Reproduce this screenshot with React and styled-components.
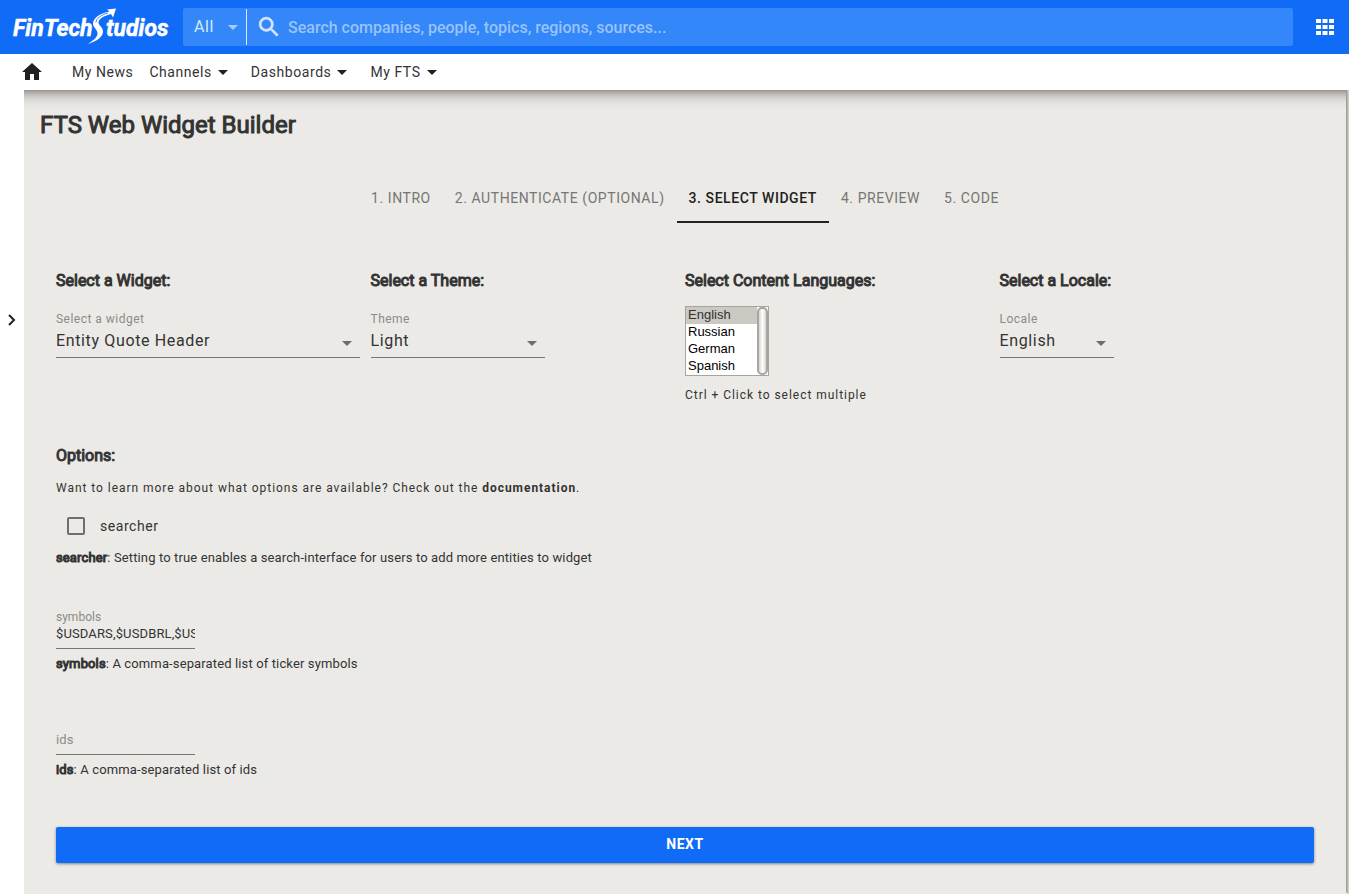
import React, { useState } from "react";
import styled, { createGlobalStyle } from "styled-components";

const GlobalStyle = createGlobalStyle`
  *, *::before, *::after { box-sizing: border-box; }
  body {
    margin: 0;
    background: #fff;
    color: #333;
    font-family: Roboto, "Liberation Sans", sans-serif;
    font-size: 14px;
    line-height: 20px;
  }
  #root { min-height: 100vh; display: flex; flex-direction: column; }
  button, input, select { font: inherit; color: inherit; letter-spacing: inherit; }
`;

const BLUE = "#106bf7";
const TRACKING = "0.04em";

const TopBar = styled.header`
  display: flex;
  align-items: center;
  height: 54px;
  background: ${BLUE};
  color: #fff;
`;

const LogoLink = styled.a`
  display: block;
  width: 183px;
  height: 54px;
  flex: none;
`;

const SearchBox = styled.form`
  display: flex;
  align-items: center;
  flex: 1;
  height: 38px;
  border-radius: 2px;
  background: #3387f8;
`;

const SelectWrap = styled.div`
  display: grid;
  align-items: center;
  > * { grid-area: 1 / 1; }
  > svg { justify-self: end; pointer-events: none; margin-right: ${(p) => p.$inset || 8}px; }
`;

const ScopeSelect = styled.select`
  appearance: none;
  width: 64px;
  height: 36px;
  padding: 0 0 0 11px;
  border: 0;
  border-right: 1px solid #d6e7fe;
  background: transparent;
  color: #d6e7fe;
  font-size: 16px;
  letter-spacing: ${TRACKING};
  outline: 0;
`;

const SearchInput = styled.input`
  flex: 1;
  min-width: 0;
  height: 36px;
  padding: 0;
  border: 0;
  outline: 0;
  background: transparent;
  font-size: 16px;
  font-weight: 500;
  &::placeholder { color: #99c3fb; opacity: 1; }
`;

const SearchIcon = styled.svg`
  margin: 0 8px 0 11px;
  flex: none;
`;

const AppsButton = styled.button`
  display: flex;
  align-items: center;
  justify-content: center;
  width: 24px;
  height: 24px;
  margin: 0 12px 0 20px;
  padding: 0;
  border: 0;
  background: transparent;
`;

const NavBar = styled.nav`
  display: flex;
  align-items: center;
  height: 36px;
  padding-left: 20px;
  color: #212121;
`;

const HomeLink = styled.a`
  display: flex;
  width: 24px;
  margin-right: 28px;
  color: #212121;
`;

const NavItem = styled.a`
  display: flex;
  align-items: center;
  gap: 6px;
  margin-right: ${(p) => p.$gap}px;
  color: #333;
  letter-spacing: ${TRACKING};
  text-decoration: none;
`;

const Body = styled.div`
  display: flex;
  flex: 1;
`;

const SideRail = styled.aside`
  width: 24px;
  padding-top: 222px;
  background: #fff;
`;

const RailButton = styled.button`
  display: flex;
  align-items: center;
  justify-content: center;
  width: 24px;
  height: 16px;
  padding: 0;
  border: 0;
  background: transparent;
`;

const Main = styled.main`
  flex: 1;
  min-width: 0;
  padding: 16px 32px 31px 16px;
  background: linear-gradient(#979390, #b3b0ad 3px, #cfcdc9 7px, #e2e0dd 12px, #ebeae6 20px);
`;

const ScrollEdge = styled.div`
  width: 3px;
  background: linear-gradient(90deg, #96928d, #dad8d3);
  border-bottom-left-radius: 4px;
`;

const PageTitle = styled.h1`
  margin: 0 0 31px;
  font-size: 24px;
  line-height: 38px;
  font-weight: 400;
  color: #333;
  -webkit-text-stroke: 1px #333;
`;

const TabList = styled.div`
  display: flex;
  justify-content: center;
  margin: 0 -16px 0 0;
`;

const Tab = styled.button`
  height: 48px;
  padding: 0 12px;
  border: 0;
  border-bottom: 2px solid ${(p) => (p.$active ? "#212121" : "transparent")};
  background: transparent;
  color: ${(p) => (p.$active ? "#212121" : "#777674")};
  font-size: 14px;
  font-weight: ${(p) => (p.$active ? 500 : 400)};
  letter-spacing: ${TRACKING};
  text-transform: uppercase;
  white-space: nowrap;
`;

const Panel = styled.section`
  padding: 48px 0 0 16px;
`;

const Columns = styled.div`
  display: grid;
  grid-template-columns: repeat(4, 1fr);
  min-height: 175px;
`;

const Heading = styled.h2`
  margin: 0;
  font-size: 16px;
  line-height: 20px;
  font-weight: 400;
  -webkit-text-stroke: 1px #333;
`;

const Field = styled.div`
  width: ${(p) => p.$width}px;
  margin-top: 18px;
`;

const FieldLabel = styled.label`
  display: block;
  font-size: 12px;
  line-height: ${(p) => (p.$compact ? 16 : 20)}px;
  letter-spacing: ${(p) => (p.$compact ? 0 : TRACKING)};
  color: #8b8a88;
`;

const FieldSelect = styled.select`
  appearance: none;
  width: 100%;
  height: 29px;
  padding: 0 24px 5px 0;
  border: 0;
  border-bottom: 1px solid #787774;
  border-radius: 0;
  outline: 0;
  background: transparent;
  color: #333;
  font-size: 16px;
  letter-spacing: ${TRACKING};
`;

const ListFrame = styled.div`
  display: flex;
  width: 84px;
  height: 70px;
  margin-top: 15px;
  border: 1px solid #a8a49e;
  background: #fff;
`;

const LanguageList = styled.select`
  flex: 1;
  min-width: 0;
  height: 68px;
  padding: 0;
  border: 0;
  border-radius: 0;
  outline: 0;
  overflow: hidden;
  background: #fff;
  color: #000;
  font-family: "Liberation Sans", Arial, sans-serif;
  font-size: 13px;
  scrollbar-width: none;
  option { height: 17px; min-height: 17px; padding: 0 2px; line-height: 17px; }
  option:checked { background: #ccc8c2; color: #333; }
`;

const ListThumb = styled.span`
  width: 11px;
  border: 2px solid #aaa69f;
  border-radius: 5px;
  background: linear-gradient(90deg, #d8d5d0, #fff 50%, #d8d5d0);
`;

const Hint = styled.p`
  margin: ${(p) => p.$top}px 0 0;
  font-size: 12px;
  line-height: 20px;
  letter-spacing: 0.08em;
`;

const DocLink = styled.a`
  color: #333;
  font-weight: 700;
  text-decoration: none;
`;

const CheckRow = styled.label`
  display: flex;
  align-items: center;
  gap: 15px;
  height: 20px;
  width: fit-content;
  margin: 18px 0 0 11px;
  color: #333;
  letter-spacing: ${TRACKING};
`;

const CheckBox = styled.input`
  appearance: none;
  width: 18px;
  height: 18px;
  margin: 0;
  border: 2px solid #6f6e6c;
  border-radius: 2px;
  &:checked { background: ${BLUE}; border-color: ${BLUE}; }
`;

const Description = styled.p`
  margin: ${(p) => p.$top || 5}px 0 0;
  font-size: 13px;
  line-height: 20px;
  letter-spacing: 0.01em;
`;

const Term = styled.span`
  -webkit-text-stroke: 1px #333;
`;

const TextField = styled.div`
  display: flex;
  flex-direction: column;
  justify-content: flex-end;
  width: 139px;
  height: 81px;
`;

const TextInput = styled.input`
  width: 139px;
  height: 24px;
  padding: 0 0 7px;
  border: 0;
  border-bottom: 1px solid #787774;
  border-radius: 0;
  outline: 0;
  background: transparent;
  font-size: 13px;
  letter-spacing: 0.01em;
  color: #333;
  &::placeholder { color: #8b8a88; opacity: 1; }
`;

const NextButton = styled.button`
  display: block;
  width: 100%;
  height: 36px;
  margin-top: 47px;
  padding: 0 0 2px;
  border: 0;
  border-radius: 2px;
  background: ${BLUE};
  color: #fff;
  font-size: 14px;
  font-weight: 700;
  letter-spacing: ${TRACKING};
  box-shadow: 0 1px 3px rgba(0, 0, 0, 0.45);
`;

const Caret = ({ color }) => (
  <svg width="10" height="5" viewBox="0 0 10 5" aria-hidden="true">
    <path d="M0 0h10L5 5z" fill={color} />
  </svg>
);

const Logo = () => (
  <svg width="183" height="54" viewBox="0 0 183 54" role="img" aria-label="FinTech Studios">
    <g fill="#fff" stroke="#fff" strokeWidth="0.5" fontFamily="Roboto, sans-serif" fontWeight="700" fontStyle="italic" fontSize="23">
      <text x="13" y="36">FinTech</text>
      <text x="106" y="36">tudios</text>
    </g>
    <path
      fill="#fff"
      stroke={BLUE}
      strokeWidth="1"
      paintOrder="stroke"
      d="M116 8.500L107 9.500L109.500 11.500C101 13 92.500 18 93 24C93.500 28 98 30 97.500 34C97 38 92 41 88 44C97 41 103 37 103 31.500C103 27 98.500 25.500 98.500 22.500C98.500 18.500 105 15.500 111 14L113 17.500Z"
    />
    <path fill="none" stroke={BLUE} strokeWidth="0.8" d="M108 13C101 15 96 18.500 96 22.500" />
  </svg>
);

const TABS = ["1. Intro", "2. Authenticate (optional)", "3. Select Widget", "4. Preview", "5. Code"];

function LabelledSelect({ id, label, width, options }) {
  return (
    <Field $width={width}>
      <FieldLabel htmlFor={id}>{label}</FieldLabel>
      <SelectWrap>
        <FieldSelect id={id}>
          {options.map((o) => <option key={o}>{o}</option>)}
        </FieldSelect>
        <Caret color="#6f6e6c" />
      </SelectWrap>
    </Field>
  );
}

export default function App() {
  const [active, setActive] = useState(2);
  return (
    <>
      <GlobalStyle />
      <TopBar>
        <LogoLink href="#home"><Logo /></LogoLink>
        <SearchBox role="search">
          <SelectWrap $inset={9}>
            <ScopeSelect aria-label="Search scope"><option>All</option></ScopeSelect>
            <Caret color="#a9cdfc" />
          </SelectWrap>
          <SearchIcon width="22" height="22" viewBox="2 2 20 20" fill="#d6e7fe" stroke="#d6e7fe" strokeWidth="0.5" aria-hidden="true">
            <path d="M15.500 14h-.79l-.28-.27A6.470 6.470 0 0 0 16 9.500 6.500 6.500 0 1 0 9.500 16c1.610 0 3.090-.59 4.230-1.570l.27.28v.79l5 4.990L20.490 19l-4.990-5zm-6 0C7.010 14 5 11.990 5 9.500S7.010 5 9.500 5 14 7.010 14 9.500 11.990 14 9.500 14z" />
          </SearchIcon>
          <SearchInput type="search" aria-label="Search" placeholder="Search companies, people, topics, regions, sources..." />
        </SearchBox>
        <AppsButton type="button" aria-label="Apps">
          <svg width="24" height="24" viewBox="0 0 24 24" fill="#fff">
            <path d="M3 4h5v4H3zM9.500 4h5v4h-5zM16 4h5v4h-5zM3 10h5v4H3zM9.500 10h5v4h-5zM16 10h5v4h-5zM3 16h5v4H3zM9.500 16h5v4h-5zM16 16h5v4h-5z" />
          </svg>
        </AppsButton>
      </TopBar>
      <NavBar>
        <HomeLink href="#home" aria-label="Home">
          <svg width="24" height="24" viewBox="0 0 24 24" fill="currentColor">
            <path d="M10 20v-6h4v6h5v-8h3L12 3 2 12h3v8z" />
          </svg>
        </HomeLink>
        <NavItem href="#news" $gap={16}>My News</NavItem>
        <NavItem href="#channels" $gap={23}>Channels <Caret color="#212121" /></NavItem>
        <NavItem href="#dashboards" $gap={23}>Dashboards <Caret color="#212121" /></NavItem>
        <NavItem href="#fts" $gap={0}>My FTS <Caret color="#212121" /></NavItem>
      </NavBar>
      <Body>
        <SideRail>
          <RailButton type="button" aria-label="Open sidebar">
            <svg width="8" height="12" viewBox="0 0 8 12" fill="none" stroke="#212121" strokeWidth="2">
              <path d="M1 1l5 5-5 5" />
            </svg>
          </RailButton>
        </SideRail>
        <Main>
          <PageTitle>FTS Web Widget Builder</PageTitle>
          <TabList role="tablist">
            {TABS.map((t, i) => (
              <Tab key={t} type="button" role="tab" aria-selected={i === active} $active={i === active} onClick={() => setActive(i)}>
                {t}
              </Tab>
            ))}
          </TabList>
          <Panel>
            <Columns>
              <div>
                <Heading>Select a Widget:</Heading>
                <LabelledSelect id="widget" label="Select a widget" width={304} options={["Entity Quote Header"]} />
              </div>
              <div>
                <Heading>Select a Theme:</Heading>
                <LabelledSelect id="theme" label="Theme" width={174} options={["Light", "Dark"]} />
              </div>
              <div>
                <Heading>Select Content Languages:</Heading>
                <ListFrame>
                  <LanguageList multiple size={4} aria-label="Select Content Languages" defaultValue={["English"]}>
                    <option>English</option>
                    <option>Russian</option>
                    <option>German</option>
                    <option>Spanish</option>
                  </LanguageList>
                  <ListThumb />
                </ListFrame>
                <Hint $top={9}>Ctrl + Click to select multiple</Hint>
              </div>
              <div>
                <Heading>Select a Locale:</Heading>
                <LabelledSelect id="locale" label="Locale" width={114} options={["English"]} />
              </div>
            </Columns>
            <Heading>Options:</Heading>
            <Hint $top={12}>
              Want to learn more about what options are available? Check out the <DocLink href="#docs">documentation</DocLink>.
            </Hint>
            <CheckRow>
              <CheckBox type="checkbox" />
              searcher
            </CheckRow>
            <Description $top={12}><Term>searcher</Term>: Setting to true enables a search-interface for users to add more entities to widget</Description>
            <TextField>
              <FieldLabel htmlFor="symbols" $compact>symbols</FieldLabel>
              <TextInput id="symbols" defaultValue="$USDARS,$USDBRL,$USDCAD" />
            </TextField>
            <Description><Term>symbols</Term>: A comma-separated list of ticker symbols</Description>
            <TextField>
              <TextInput aria-label="ids" placeholder="ids" />
            </TextField>
            <Description><Term>ids</Term>: A comma-separated list of ids</Description>
            <NextButton type="button">NEXT</NextButton>
          </Panel>
        </Main>
        <ScrollEdge />
      </Body>
    </>
  );
}
